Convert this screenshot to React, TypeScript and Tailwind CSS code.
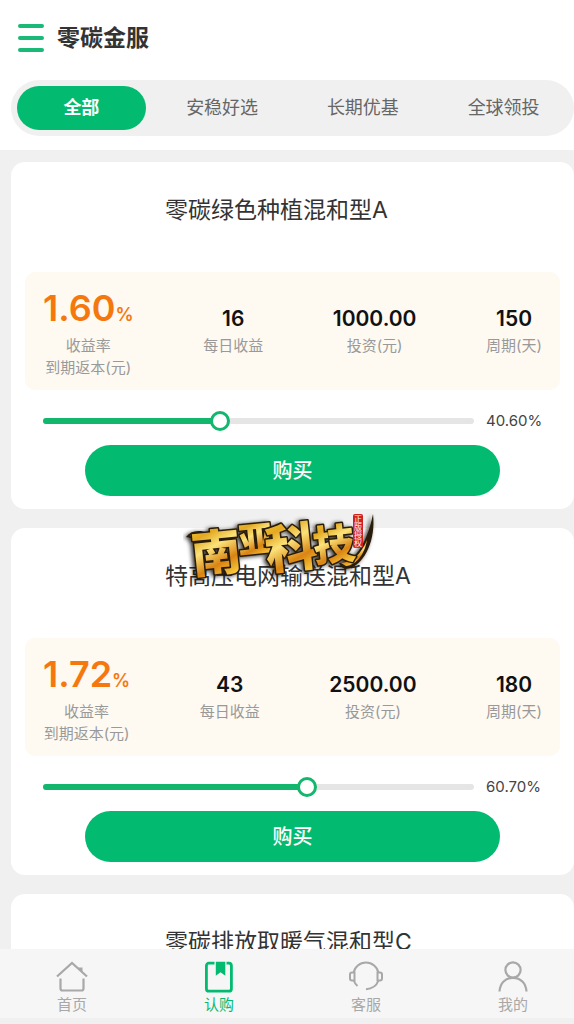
import { useState } from "react";

const tabs = ["全部", "安稳好选", "长期优基", "全球领投"];

type Product = {
  name: string;
  detail?: {
    rate: string;
    daily: string;
    amount: string;
    days: string;
    progress: number;
  };
};

const products: Product[] = [
  {
    name: "零碳绿色种植混和型A",
    detail: { rate: "1.60", daily: "16", amount: "1000.00", days: "150", progress: 40.6 },
  },
  {
    name: "特高压电网输送混和型A",
    detail: { rate: "1.72", daily: "43", amount: "2500.00", days: "180", progress: 60.7 },
  },
  { name: "零碳排放取暖气混和型C" },
];

function HomeIcon() {
  return (
    <svg className="size-8" viewBox="0 0 32 32" fill="none" stroke="currentColor" strokeWidth="2.2">
      <path d="M1 15.500 16 2 31 15.500" />
      <path d="M22 6.500h4.500v5z" fill="currentColor" stroke="none" />
      <path d="M4.500 17.500v10q0 2 2 2h19q2 0 2-2v-10" />
    </svg>
  );
}

function BookIcon() {
  return (
    <svg className="size-8" viewBox="0 0 32 32" fill="none" stroke="currentColor" strokeWidth="2.8">
      <rect x="3.400" y="2.200" width="25" height="28" rx="2.500" />
      <path d="M11.500 0h12v4h-12z" fill="#f6f6f6" stroke="none" />
      <path d="M12.800 .8h9.500v14l-4.750-3.500-4.750 3.500z" fill="currentColor" stroke="none" />
    </svg>
  );
}

function ServiceIcon() {
  return (
    <svg
      className="size-8 overflow-visible"
      viewBox="0 0 32 32"
      fill="none"
      stroke="currentColor"
      strokeWidth="2"
    >
      <path d="M3.500 12A12.700 12.700 0 0 1 28.500 12" />
      <path d="M28.500 19.500Q25.500 27.500 16 28.300" />
      <path d="M4 20q1 3 3.500 5" />
      <path d="M4.500 11.500H2q-2 0-2 2v4q0 2 2 2h2.500z" />
      <path d="M27.500 11.500H30q2 0 2 2v4q0 2-2 2h-2.500z" />
    </svg>
  );
}

function UserIcon() {
  return (
    <svg className="size-8" viewBox="0 0 32 32" fill="none" stroke="currentColor" strokeWidth="2.2">
      <circle cx="16" cy="9" r="7.600" />
      <path d="M2.500 30.500C3 22 8.500 16.800 16 16.800S29 22 29.500 30.500" />
    </svg>
  );
}

const navItems = [
  { label: "首页", Icon: HomeIcon },
  { label: "认购", Icon: BookIcon },
  { label: "客服", Icon: ServiceIcon },
  { label: "我的", Icon: UserIcon },
];

// Gold brush style brand mark that floats over the list
function BrandMark() {
  return (
    <svg
      className="pointer-events-none absolute left-1/3 top-[508px] h-[76px] w-[200px] -translate-x-2"
      viewBox="0 0 200 76"
      role="img"
      aria-label="南亚科技"
    >
      <defs>
        <linearGradient id="gold" x1="0" y1="0" x2="0.3" y2="1">
          <stop offset="0" stopColor="#f7dc5a" />
          <stop offset="0.35" stopColor="#e3a920" />
          <stop offset="0.55" stopColor="#fbe27a" />
          <stop offset="0.8" stopColor="#d98412" />
          <stop offset="1" stopColor="#f7c53c" />
        </linearGradient>
        <filter id="glow" x="-20%" y="-20%" width="140%" height="140%">
          <feDropShadow dx="-2" dy="1" stdDeviation="2" floodColor="#000" floodOpacity="0.8" />
        </filter>
      </defs>
      <g filter="url(#glow)">
        <path
          d="M156 55C170 54 183 40 190 6C193 32 182 54 168 60C162 62 158 60 156 55Z"
          fill="#2a1c08"
        />
        <path d="M158 55C170 54 178 46 184 32C182 45 174 57 163 58Z" fill="url(#gold)" />
        <path d="M3 29Q8 22 18 23L26 25 12 31Z" fill="#2a1c08" />
        <path d="M7 28Q12 24 24 25L13 29Z" fill="url(#gold)" />
        <g
          fill="url(#gold)"
          stroke="#2a1c08"
          strokeWidth="3"
          strokeLinejoin="round"
          paintOrder="stroke"
          fontFamily="'Noto Sans CJK SC', sans-serif"
          fontWeight="900"
        >
          <text x="8" y="63" fontSize="50" transform="rotate(-6 32 42)">南</text>
          <text x="55" y="44" fontSize="35" transform="rotate(-6 72 30)">亚</text>
          <text x="82" y="59" fontSize="52" transform="rotate(-6 108 40)">科</text>
          <text x="130" y="52" fontSize="42" transform="rotate(-6 150 37)">技</text>
        </g>
      </g>
      <rect x="170" y="6" width="10" height="34" rx="2" fill="#d21f1f" />
      <text
        x="175"
        y="7"
        fill="#fff"
        fontSize="8"
        fontFamily="'Noto Sans CJK SC', sans-serif"
        style={{ writingMode: "vertical-rl" }}
      >
        正版授权
      </text>
    </svg>
  );
}

function Stat({ value, label }: { value: string; label: string }) {
  return (
    <div className="mt-[18px] text-center">
      <div className="mb-[2px] h-7 text-[21px] font-semibold leading-[28px] text-[#111]">
        {value}
      </div>
      <div className="text-[15px] leading-[22px] text-[#999]">{label}</div>
    </div>
  );
}

function ProductDetail({ name, detail }: Required<Product>) {
  const [progress, setProgress] = useState(detail.progress);

  return (
    <>
      <div className="flex items-start justify-between rounded-[10px] bg-[#fef9f1] px-[18px] pb-[11px] pt-[15px]">
        <div className="text-center">
          <div className="mb-[6px] h-[42px] text-[36px] font-semibold leading-[42px] text-[#f5780f]">
            {detail.rate}
            <span className="text-lg leading-none">%</span>
          </div>
          <div className="text-[15px] leading-[22px] text-[#999]">
            收益率
            <br />
            到期返本(元)
          </div>
        </div>
        <Stat value={detail.daily} label="每日收益" />
        <Stat value={detail.amount} label="投资(元)" />
        <Stat value={detail.days} label="周期(天)" />
      </div>

      <div className="mt-5 flex h-[22px] items-center gap-3 px-[18px]">
        <div className="relative h-[6px] flex-1 rounded-full bg-[#e5e5e5]">
          <div className="h-full rounded-full bg-[#12b76d]" style={{ width: `${progress}%` }} />
          <input
            type="range"
            min="0"
            max="100"
            step="0.1"
            value={progress}
            onChange={(e) => setProgress(Number(e.target.value))}
            aria-label={name}
            className="absolute -left-2 -top-[7px] h-5 w-[calc(100%+20px)] appearance-none bg-transparent [&::-webkit-slider-thumb]:size-5 [&::-webkit-slider-thumb]:appearance-none [&::-webkit-slider-thumb]:rounded-full [&::-webkit-slider-thumb]:border-3 [&::-webkit-slider-thumb]:border-[#12b76d] [&::-webkit-slider-thumb]:bg-white"
          />
        </div>
        <span className="w-14 whitespace-nowrap text-[15px] text-[#444]">
          {progress.toFixed(2)}%
        </span>
      </div>

      <div className="mt-[13px] px-[60px]">
        <button className="h-[51px] w-full rounded-full bg-[#03bb70] text-xl font-medium text-white">
          购买
        </button>
      </div>
    </>
  );
}

function ProductCard({ product }: { product: Product }) {
  return (
    <section className="shrink-0 rounded-[14px] bg-white px-[14px] pb-[13px] pt-8">
      <h2 className="mb-[46px] ml-[140px] text-[23px] leading-8 text-[#333]">{product.name}</h2>
      {product.detail && <ProductDetail name={product.name} detail={product.detail} />}
    </section>
  );
}

export default function App() {
  const [activeTab, setActiveTab] = useState(0);
  const [activeNav, setActiveNav] = useState(1);

  return (
    <div className="relative flex h-screen flex-col overflow-hidden bg-[#f0f0f0] font-['Inter','Noto_Sans_CJK_SC',sans-serif]">
      <header className="bg-white pb-[14px] pl-[11px] pt-[18px]">
        <div className="flex h-10 items-center gap-[13px] pl-[7px]">
          <button aria-label="菜单" className="flex w-[26px] flex-col gap-2">
            <span className="h-1 rounded-full bg-[#1bb978]" />
            <span className="h-1 rounded-full bg-[#1bb978]" />
            <span className="h-1 rounded-full bg-[#1bb978]" />
          </button>
          <h1 className="text-[23px] font-bold text-[#333]">零碳金服</h1>
        </div>

        <nav className="mt-[22px] grid grid-cols-4 rounded-full bg-[#f0f0f0] py-[6px]">
          {tabs.map((tab, i) => (
            <button
              key={tab}
              onClick={() => setActiveTab(i)}
              className={`mx-[6px] h-11 rounded-full text-lg ${
                activeTab === i ? "bg-[#03bb70] font-bold text-white" : "text-[#666]"
              }`}
            >
              {tab}
            </button>
          ))}
        </nav>
      </header>

      <main className="flex min-h-0 flex-1 flex-col gap-[19px] overflow-hidden pl-[11px] pt-3">
        {products.map((product) => (
          <ProductCard key={product.name} product={product} />
        ))}
      </main>

      <footer className="flex justify-between border-b-[6px] border-[#f0f0f0] bg-[#f6f6f6] pb-[2px] pl-11 pr-[33px] pt-3">
        {navItems.map(({ label, Icon }, i) => (
          <button
            key={label}
            onClick={() => setActiveNav(i)}
            className={`flex w-14 flex-col items-center gap-[1px] text-[15px] leading-[22px] ${
              activeNav === i ? "text-[#03bb70]" : "text-[#a8a8a8]"
            }`}
          >
            <Icon />
            {label}
          </button>
        ))}
      </footer>

      <BrandMark />
    </div>
  );
}
